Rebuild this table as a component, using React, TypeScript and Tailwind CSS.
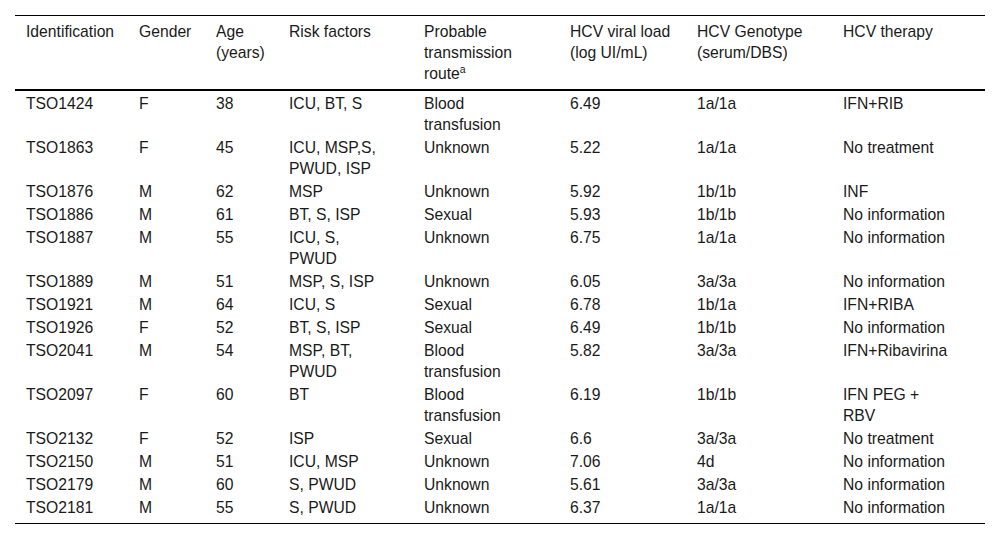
import React from 'react';

type Row = {
  id: string;
  gender: string;
  age: string;
  risk: string[];
  route: string[];
  load: string;
  genotype: string;
  therapy: string[];
};

const rows: Row[] = [
  { id: 'TSO1424', gender: 'F', age: '38', risk: ['ICU, BT, S'], route: ['Blood', 'transfusion'], load: '6.49', genotype: '1a/1a', therapy: ['IFN+RIB'] },
  { id: 'TSO1863', gender: 'F', age: '45', risk: ['ICU, MSP,S,', 'PWUD, ISP'], route: ['Unknown'], load: '5.22', genotype: '1a/1a', therapy: ['No treatment'] },
  { id: 'TSO1876', gender: 'M', age: '62', risk: ['MSP'], route: ['Unknown'], load: '5.92', genotype: '1b/1b', therapy: ['INF'] },
  { id: 'TSO1886', gender: 'M', age: '61', risk: ['BT, S, ISP'], route: ['Sexual'], load: '5.93', genotype: '1b/1b', therapy: ['No information'] },
  { id: 'TSO1887', gender: 'M', age: '55', risk: ['ICU, S,', 'PWUD'], route: ['Unknown'], load: '6.75', genotype: '1a/1a', therapy: ['No information'] },
  { id: 'TSO1889', gender: 'M', age: '51', risk: ['MSP, S, ISP'], route: ['Unknown'], load: '6.05', genotype: '3a/3a', therapy: ['No information'] },
  { id: 'TSO1921', gender: 'M', age: '64', risk: ['ICU, S'], route: ['Sexual'], load: '6.78', genotype: '1b/1a', therapy: ['IFN+RIBA'] },
  { id: 'TSO1926', gender: 'F', age: '52', risk: ['BT, S, ISP'], route: ['Sexual'], load: '6.49', genotype: '1b/1b', therapy: ['No information'] },
  { id: 'TSO2041', gender: 'M', age: '54', risk: ['MSP, BT,', 'PWUD'], route: ['Blood', 'transfusion'], load: '5.82', genotype: '3a/3a', therapy: ['IFN+Ribavirina'] },
  { id: 'TSO2097', gender: 'F', age: '60', risk: ['BT'], route: ['Blood', 'transfusion'], load: '6.19', genotype: '1b/1b', therapy: ['IFN PEG +', 'RBV'] },
  { id: 'TSO2132', gender: 'F', age: '52', risk: ['ISP'], route: ['Sexual'], load: '6.6', genotype: '3a/3a', therapy: ['No treatment'] },
  { id: 'TSO2150', gender: 'M', age: '51', risk: ['ICU, MSP'], route: ['Unknown'], load: '7.06', genotype: '4d', therapy: ['No information'] },
  { id: 'TSO2179', gender: 'M', age: '60', risk: ['S, PWUD'], route: ['Unknown'], load: '5.61', genotype: '3a/3a', therapy: ['No information'] },
  { id: 'TSO2181', gender: 'M', age: '55', risk: ['S, PWUD'], route: ['Unknown'], load: '6.37', genotype: '1a/1a', therapy: ['No information'] },
];

const Lines = ({ lines }: { lines: string[] }) => (
  <>
    {lines.map((l, i) => (
      <div key={i}>{l}</div>
    ))}
  </>
);

export default function App() {
  return (
    <div
      className="bg-white w-[1000px] h-[539px] pt-[15px] px-[15px] text-[#1a1a1a] text-[15.7px] leading-[21px]"
      style={{ fontFamily: '"Liberation Sans", Arial, sans-serif' }}
    >
      <table className="w-[970px] table-fixed border-collapse border-t border-b border-black">
        <colgroup>
          <col className="w-[113px]" />
          <col className="w-[77px]" />
          <col className="w-[73px]" />
          <col className="w-[135px]" />
          <col className="w-[146px]" />
          <col className="w-[127px]" />
          <col className="w-[146px]" />
          <col className="w-[153px]" />
        </colgroup>
        <thead>
          <tr className="border-b-2 border-black text-left align-top">
            <th className="font-normal pl-[11px] pt-[5px] pb-[5px]">Identification</th>
            <th className="font-normal pl-[11px] pt-[5px] pb-[5px]">Gender</th>
            <th className="font-normal pl-[11px] pt-[5px] pb-[5px]">
              <div>Age</div>
              <div>(years)</div>
            </th>
            <th className="font-normal pl-[11px] pt-[5px] pb-[5px]">Risk factors</th>
            <th className="font-normal pl-[11px] pt-[5px] pb-[5px]">
              <div>Probable</div>
              <div>transmission</div>
              <div>
                route<sup className="text-[10.5px] leading-none relative -top-[6px]">a</sup>
              </div>
            </th>
            <th className="font-normal pl-[11px] pt-[5px] pb-[5px]">
              <div>HCV viral load</div>
              <div>(log UI/mL)</div>
            </th>
            <th className="font-normal pl-[11px] pt-[5px] pb-[5px]">
              <div>HCV Genotype</div>
              <div>(serum/DBS)</div>
            </th>
            <th className="font-normal pl-[11px] pt-[5px] pb-[5px]">HCV therapy</th>
          </tr>
        </thead>
        <tbody>
          {rows.map((r, idx) => {
            const first = idx === 0;
            const last = idx === rows.length - 1;
            const pad = `pl-[11px] whitespace-nowrap ${first ? 'pt-[2px]' : 'pt-px'} ${last ? 'pb-[5px]' : 'pb-px'}`;
            return (
              <tr key={r.id} className="align-top">
                <td className={pad}>{r.id}</td>
                <td className={pad}>{r.gender}</td>
                <td className={pad}>{r.age}</td>
                <td className={pad}><Lines lines={r.risk} /></td>
                <td className={pad}><Lines lines={r.route} /></td>
                <td className={pad}>{r.load}</td>
                <td className={pad}>{r.genotype}</td>
                <td className={pad}><Lines lines={r.therapy} /></td>
              </tr>
            );
          })}
        </tbody>
      </table>
    </div>
  );
}
